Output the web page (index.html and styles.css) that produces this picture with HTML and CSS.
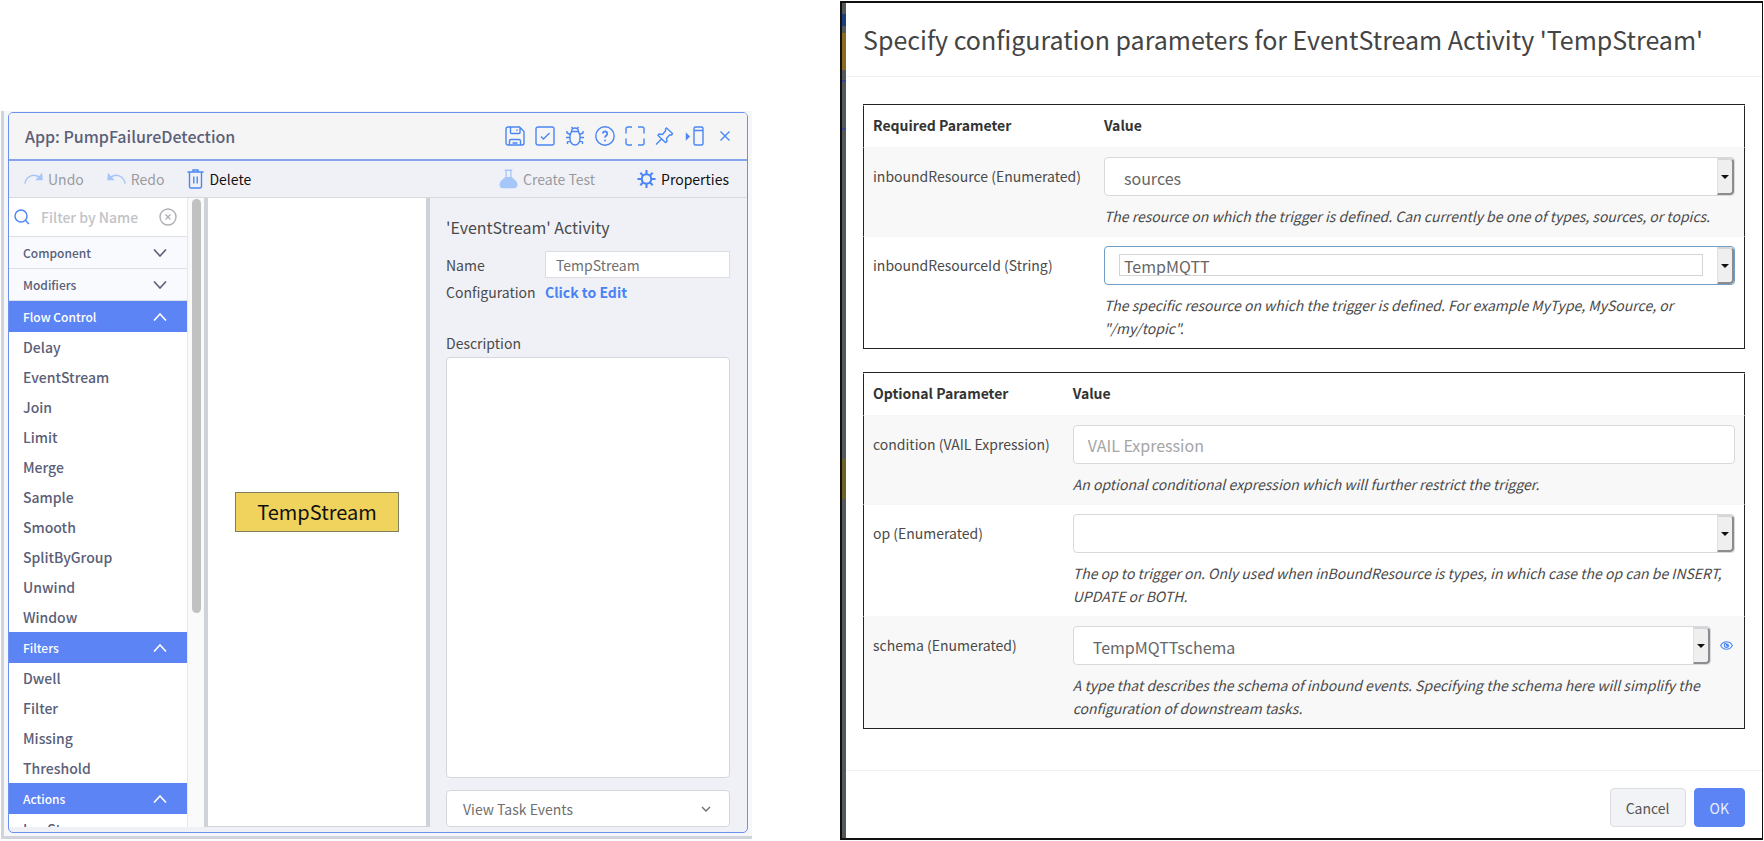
FILE: index.html
```html
<!DOCTYPE html>
<html lang="en">
<head>
<meta charset="utf-8">
<title>App: PumpFailureDetection</title>
<link rel="stylesheet" href="styles.css">
</head>
<body>
<main class="page">
  <section class="frame">
    <div class="app">
      <header class="app-header">
        <h1 class="app-title">App: PumpFailureDetection</h1>
        <div class="app-actions">
          <button class="icon-btn" aria-label="Save"><svg viewBox="0 0 20 20"><path d="M3 1h11.5L19 5.500V17a2 2 0 0 1-2 2H3a2 2 0 0 1-2-2V3a2 2 0 0 1 2-2zM5.500 1v5.500a1 1 0 0 0 1 1h7.500a1 1 0 0 0 1-1V1.500M12 3.500v1.500M4.500 19v-4a1.500 1.500 0 0 1 1.500-1.500h8a1.500 1.500 0 0 1 1.500 1.500v4M7.500 17h5"/></svg></button>
          <button class="icon-btn" aria-label="Validate"><svg viewBox="0 0 20 20"><rect x="1" y="1" width="18" height="18" rx="2"/><path d="M6 10.500l2.500 2.500L14.500 7"/></svg></button>
          <button class="icon-btn" aria-label="Debug"><svg viewBox="0 0 20 20"><path d="M6.500 5.500a3.500 3.500 0 0 1 7 0M6.500 5.500h7l1.500 4v3.500a5 6 0 0 1-10 0V9.500zM5.500 8.500L2 7V5M5 11.500H1M5.500 14.500L2.500 16v2M14.500 8.500L18 7V5M15 11.500H19M14.500 14.500l3 1.500v2M7.500 2.500L6.500 1M12.500 2.500l1-1.500"/></svg></button>
          <button class="icon-btn" aria-label="Help"><svg viewBox="0 0 20 20"><circle cx="10" cy="10" r="9.200"/><path stroke-width="1.800" d="M7.800 7.600a2.200 2.200 0 1 1 3.500 1.800c-.9.600-1.300 1-1.300 2.100M10 13.800v1.400"/></svg></button>
          <button class="icon-btn" aria-label="Full screen"><svg viewBox="0 0 20 20"><path d="M7 1H3a2 2 0 0 0-2 2v4.500M13 1h4a2 2 0 0 1 2 2v4.500M7 19H3a2 2 0 0 1-2-2v-4.500M13 19h4a2 2 0 0 0 2-2v-4.500"/></svg></button>
          <button class="icon-btn" aria-label="Pin"><svg viewBox="0 0 20 20"><path d="M11.500 2l6 5.500-1 1.500h-2l-3 3.500.5 3-1.500 1L3 9.500l1-1.500 3.500.5L10.500 5V3zM6.500 13L1 18.500"/></svg></button>
          <button class="icon-btn" aria-label="Dock"><svg viewBox="0 0 20 20"><path d="M10.500 1h6a1.500 1.500 0 0 1 1.500 1.500v15a1.500 1.500 0 0 1-1.500 1.500h-6A1.500 1.500 0 0 1 9 17.500v-15A1.500 1.500 0 0 1 10.500 1zM9 4.500h9"/><path class="solid" d="M1.500 8L4 10.500l-2.500 2.500z"/></svg></button>
          <button class="icon-btn" aria-label="Close"><svg viewBox="0 0 20 20"><path d="M5.500 5.500l9 9M14.500 5.500l-9 9"/></svg></button>
        </div>
      </header>
      <div class="toolbar">
        <div class="tools">
          <button class="tool" disabled><svg class="tool-icon" viewBox="0 0 20 20"><path d="M1 15C2 7 11 3 17 9"/><path class="solid" d="M13.500 10.500L19 10.500 18.500 5z"/></svg>Undo</button>
          <button class="tool" disabled><svg class="tool-icon" viewBox="0 0 20 20"><path d="M19 15C18 7 9 3 3 9"/><path class="solid" d="M6.500 10.500L1 10.500 1.500 5z"/></svg>Redo</button>
          <button class="tool"><svg class="tool-icon trash" viewBox="0 0 16 20"><path d="M0 3h16M2 3.500v14A1.500 1.500 0 0 0 3.500 19h9a1.500 1.500 0 0 0 1.500-1.500v-14M5.500 3V1h5v2M6.300 7.500v7M9.700 7.500v7"/></svg>Delete</button>
        </div>
        <div class="tools tools-end">
          <button class="tool" disabled><svg class="tool-icon" viewBox="0 0 20 20"><path d="M6 .800h8M7.500 1v7M12.500 1v7"/><path class="solid" d="M7 8.500L2.500 12.500C.500 15 1 19 4 19h12c3 0 3.500-4 1.500-6.500L13 8.500z"/></svg>Create Test</button>
          <button class="tool"><svg class="tool-icon gear" viewBox="0 0 20 20"><circle cx="10" cy="10" r="5"/><path d="M10 5V.500M10 19.500V15M5 10H.500M19.500 10H15M6.500 6.500L3.500 3.500M16.500 16.500l-3-3M6.500 13.500l-3 3M16.500 3.500l-3 3"/></svg>Properties</button>
        </div>
      </div>
      <div class="workspace">
        <aside class="sidebar">
          <div class="palette">
            <div class="filter">
              <svg class="search-icon" viewBox="0 0 16 16"><circle cx="7" cy="7" r="6"/><path d="M11.300 11.300L15 15"/></svg>
              <input class="filter-input" type="text" aria-label="Filter by Name" placeholder="Filter by Name">
              <button class="clear" aria-label="Clear filter"><svg viewBox="0 0 18 18"><circle cx="9" cy="9" r="8"/><path d="M6.500 6.500l5 5M11.500 6.500l-5 5"/></svg></button>
            </div>
            <button class="group">Component<svg class="chevron" viewBox="0 0 14 8"><path d="M1 .500l6 6.500 6-6.500"/></svg></button>
            <button class="group">Modifiers<svg class="chevron" viewBox="0 0 14 8"><path d="M1 .500l6 6.500 6-6.500"/></svg></button>
            <button class="group open">Flow Control<svg class="chevron" viewBox="0 0 14 8"><path d="M1 7.500L7 1l6 6.500"/></svg></button>
            <ul class="items">
              <li>Delay</li><li>EventStream</li><li>Join</li><li>Limit</li><li>Merge</li><li>Sample</li><li>Smooth</li><li>SplitByGroup</li><li>Unwind</li><li>Window</li>
            </ul>
            <button class="group open">Filters<svg class="chevron" viewBox="0 0 14 8"><path d="M1 7.500L7 1l6 6.500"/></svg></button>
            <ul class="items">
              <li>Dwell</li><li>Filter</li><li>Missing</li><li>Threshold</li>
            </ul>
            <button class="group open">Actions<svg class="chevron" viewBox="0 0 14 8"><path d="M1 7.500L7 1l6 6.500"/></svg></button>
            <ul class="items">
              <li>LogStream</li>
            </ul>
          </div>
          <div class="scroll-track"><div class="scroll-thumb"></div></div>
        </aside>
        <div class="canvas">
          <div class="node">TempStream</div>
        </div>
        <form class="properties">
          <h2 class="prop-title">'EventStream' Activity</h2>
          <div class="prop-grid">
            <label for="task-name">Name</label>
            <input id="task-name" class="prop-input" type="text" value="TempStream">
            <span>Configuration</span>
            <a class="edit-link" href="#config">Click to Edit</a>
          </div>
          <label class="desc-label" for="task-desc">Description</label>
          <textarea id="task-desc" class="desc"></textarea>
          <button class="events" type="button">View Task Events<svg class="small-chevron" viewBox="0 0 10 6"><path d="M1 1l4 4 4-4"/></svg></button>
        </form>
      </div>
    </div>
  </section>

  <section class="dialog" id="config" role="dialog" aria-labelledby="dialog-title">
    <div class="dialog-body">
      <header class="dialog-header"><h2 class="dialog-title" id="dialog-title">Specify configuration parameters for EventStream Activity 'TempStream'</h2></header>
      <div class="dialog-content">
        <table class="params">
          <thead><tr><th>Required Parameter</th><th>Value</th></tr></thead>
          <tbody>
            <tr>
              <td><label for="p-resource">inboundResource (Enumerated)</label></td>
              <td>
                <div class="picker"><select id="p-resource"><option>sources</option></select><span class="drop"></span></div>
                <p class="hint">The resource on which the trigger is defined. Can currently be one of types, sources, or topics.</p>
              </td>
            </tr>
            <tr>
              <td><label for="p-id">inboundResourceId (String)</label></td>
              <td>
                <div class="picker combo"><input id="p-id" type="text" value="TempMQTT"><button class="drop" aria-label="Show choices"></button></div>
                <p class="hint">The specific resource on which the trigger is defined. For example MyType, MySource, or "/my/topic".</p>
              </td>
            </tr>
          </tbody>
        </table>
        <table class="params">
          <thead><tr><th>Optional Parameter</th><th>Value</th></tr></thead>
          <tbody>
            <tr>
              <td><label for="p-cond">condition (VAIL Expression)</label></td>
              <td>
                <input id="p-cond" class="text-field" type="text" placeholder="VAIL Expression">
                <p class="hint">An optional conditional expression which will further restrict the trigger.</p>
              </td>
            </tr>
            <tr>
              <td><label for="p-op">op (Enumerated)</label></td>
              <td>
                <div class="picker"><select id="p-op"><option></option></select><span class="drop"></span></div>
                <p class="hint">The op to trigger on. Only used when inBoundResource is types, in which case the op can be INSERT, UPDATE or BOTH.</p>
              </td>
            </tr>
            <tr>
              <td><label for="p-schema">schema (Enumerated)</label></td>
              <td>
                <div class="with-action">
                  <div class="picker"><select id="p-schema"><option>TempMQTTschema</option></select><span class="drop"></span></div>
                  <button class="view" aria-label="View schema"><svg viewBox="0 0 12 10"><path d="M.600 5C3 .300 9 .300 11.400 5 9 9.700 3 9.700 .600 5z"/><path d="M6 2.800a2 2 0 1 0 2 2"/><circle class="solid" cx="6.700" cy="4.600" r=".9"/></svg></button>
                </div>
                <p class="hint">A type that describes the schema of inbound events. Specifying the schema here will simplify the configuration of downstream tasks.</p>
              </td>
            </tr>
          </tbody>
        </table>
      </div>
      <footer class="dialog-footer">
        <button class="btn">Cancel</button>
        <button class="btn primary">OK</button>
      </footer>
    </div>
  </section>
</main>
</body>
</html>
```

FILE: styles.css
```css
* { box-sizing: border-box; }

body {
  margin: 0;
  background: #fff;
  color: #4a4a4a;
  font-family: "Noto Sans CJK SC", "Open Sans", sans-serif;
  font-size: 14px;
  line-height: 24px;
}

button, input, select, textarea { font: inherit; color: inherit; margin: 0; }
button { background: none; border: 0; padding: 0; text-align: left; }
h1, h2, p, ul { margin: 0; padding: 0; font-weight: 400; }
svg { display: block; fill: none; stroke: currentColor; stroke-width: 1.4; }
.solid { fill: currentColor; }

.page {
  display: grid;
  grid-template-columns: 752fr 924fr;
  grid-template-rows: minmax(0, 1fr);
  gap: 88px;
  height: 100vh;
  min-height: 841px;
}

/* App window */
.frame {
  display: flex;
  min-height: 0;
  margin: 111px 0 2px 1px;
  padding: 1px 4px 3px;
  border-left: 3px solid #d0d2dc;
  border-bottom: 3px solid #d0d2dc;
  background: #f6f7fa;
}

.app {
  flex: 1;
  min-width: 0;
  display: flex;
  flex-direction: column;
  padding-bottom: 5px;
  border: 1px solid #6b90ee;
  border-radius: 5px;
  background: #f0f1f6;
  overflow: hidden;
}

.app-header {
  display: flex;
  align-items: center;
  justify-content: space-between;
  height: 48px;
  padding: 0 12px 0 16px;
  border-bottom: 2px solid #86a3ee;
  background: #f5f5f5;
}

.app-title { color: #5a6078; font-size: 16px; font-weight: 500; }
.app-actions { display: flex; gap: 10px; color: #4a86f5; }
.icon-btn svg { width: 20px; height: 20px; }

.toolbar {
  display: flex;
  justify-content: space-between;
  height: 37px;
  padding: 0 18px 0 15px;
  border-bottom: 1px solid #d9dade;
}

.tools { display: flex; gap: 23px; }
.tools-end { gap: 42px; }
.tool { display: flex; align-items: center; gap: 5px; color: #111; font-size: 14px; }
.tool:disabled { color: #9a9b9f; }
.tool-icon { width: 19px; height: 20px; color: #4a86f5; }
.tool:disabled .tool-icon { color: #a5c6f9; }
.tool .trash { width: 17px; }
.gear { stroke-width: 2.2; }

.workspace { flex: 1; min-height: 0; display: flex; }

.sidebar { display: flex; width: 195px; overflow: hidden; }
.palette { flex: 1; overflow: hidden; background: #fff; color: #5a6078; font-weight: 500; }
.filter { display: flex; align-items: center; height: 39px; padding: 0 10px 0 5px; border-bottom: 1px solid #dddfe5; }
.search-icon { width: 16px; height: 16px; color: #4a86f5; }
.filter-input { flex: 1; min-width: 0; height: 30px; padding: 0 0 0 11px; border: 0; background: none; outline: 0; }
.filter-input::placeholder { color: #c2c3c8; opacity: 1; }
.clear svg { width: 18px; height: 18px; color: #aeb0b5; }

.group {
  display: flex;
  align-items: center;
  justify-content: space-between;
  width: 100%;
  height: 32px;
  padding: 0 20px 0 14px;
  border-bottom: 1px solid #dddfe5;
  background: #f9fafe;
  font-size: 12px;
  font-weight: 500;
}
.group.open { height: 31px; border-bottom: 0; background: #5c84f4; color: #fff; }
.chevron { width: 14px; height: 8px; stroke-width: 1.6; }

.items { list-style: none; padding-left: 14px; line-height: 30px; font-weight: 500; }

.scroll-track { width: 17px; padding: 1px 4px; border-left: 1px solid #e6e7ea; background: #fafafa; }
.scroll-thumb { width: 9px; height: 66%; border-radius: 5px; background: #c1c1c1; }

.canvas {
  flex: 1;
  display: grid;
  place-items: center;
  border: solid #d0d2d9;
  border-width: 0 4px 1px;
  background: #fff;
}
.node {
  padding: 5px 21px;
  border: 1px solid #80805f;
  background: #efd35d;
  color: #111;
  font-size: 20px;
  line-height: 28px;
}

.properties { width: 317px; display: flex; flex-direction: column; padding: 17px 17px 0 16px; }
.prop-title { font-size: 16px; }
.prop-grid { display: grid; grid-template-columns: 99px 1fr; align-items: center; row-gap: 2px; margin-top: 12px; }
.prop-input { width: 100%; height: 27px; padding: 0 10px; border: 1px solid #dcdde2; background: #fff; color: #707070; }
.edit-link { color: #4a82f5; font-weight: 700; text-decoration: none; }
.desc-label { margin-top: 27px; }
.desc { flex: 1; width: 100%; margin: 2px 0 12px; border: 1px solid #d5d7dc; border-radius: 4px; background: #fff; resize: none; }
.events {
  display: flex;
  align-items: center;
  justify-content: space-between;
  height: 37px;
  padding: 0 18px 0 16px;
  border: 1px solid #d5d7dc;
  border-radius: 4px;
  background: #fff;
  color: #707070;
}
.small-chevron { width: 10px; height: 6px; }

/* Dialog */
.dialog {
  display: flex;
  margin: 1px 1px 1px 0;
  padding-left: 4px;
  border: 2px solid #111;
  border-right-width: 1px;
  background: linear-gradient(#55585b 11px, #1d3c7c 11px 23px, #55585b 23px 30px, #8a6a22 30px 67px, #55585b 67px 77px, #3b4690 77px 79px, #55585b 79px 125px, #3b4690 125px 127px, #55585b 127px 456px, #6d6128 456px 496px, #55585b 496px);
}
.dialog-body { flex: 1; display: flex; flex-direction: column; background: #fff; }
.dialog-header { display: flex; align-items: center; height: 74px; padding: 0 17px 2px; border-bottom: 1px solid #f0f0f1; }
.dialog-title { font-size: 25px; line-height: 32px; color: #444; }
.dialog-content { flex: 1; display: flex; flex-direction: column; gap: 23px; padding: 27px 17px 0; }

.params { width: 100%; border-spacing: 0; border: solid #222; border-width: 1px 0; }
.params th, .params td { padding: 9px 9px 8px; border-top: 1px solid #f6f6f6; text-align: left; vertical-align: top; }
.params th { border-top-color: #fff; padding: 7px 9px 10px; color: #333; font-weight: 700; }
.params th:first-child, .params td:first-child { padding-right: 14px; border-left: 1px solid #222; white-space: nowrap; }
.params th:last-child, .params td:last-child { border-right: 1px solid #222; width: 100%; }
.params tbody tr:nth-child(odd) { background: #f8f8f8; }
.params td label { display: block; padding-top: 7px; }

.picker { position: relative; flex: 1; display: flex; }
.picker select, .text-field {
  appearance: none;
  width: 100%;
  height: 39px;
  padding: 2px 19px 0;
  border: 1px solid #d8d9dd;
  border-radius: 4px;
  background: #fff;
  color: #666;
  font-size: 16px;
}
.text-field { padding: 0 14px; }
.text-field::placeholder { color: #a5a5a5; opacity: 1; }
.drop {
  position: absolute;
  top: 1px;
  right: 1px;
  bottom: 1px;
  width: 17px;
  display: grid;
  place-items: center;
  border: 2px solid #8c8c8e;
  border-top-color: #d6d6d8;
  border-left: 1px solid #e0e0e2;
  border-radius: 0 4px 4px 0;
  background: #efefef;
  pointer-events: none;
}
.drop::after { content: ""; border: 4px solid transparent; border-top-color: #111; border-bottom: 0; }
.combo { height: 39px; padding: 7px 31px 8px 14px; border: 1px solid #6f9fc6; border-radius: 4px; background: #fff; }
.combo input { width: 100%; padding: 2px 4px 0; border: 1px solid #d4d4d4; background: #fff; color: #666; font-size: 16px; outline: 0; }
.combo .drop { top: 0; right: 0; bottom: 0; }
.with-action { display: flex; align-items: center; gap: 9px; }
.view { color: #4a86f5; padding-right: 2px; }
.view svg { width: 13px; height: 11px; stroke-width: 1; }

.hint { margin-top: 9px; font-size: 14px; line-height: 23px; font-style: italic; }

.dialog-footer { display: flex; justify-content: flex-end; gap: 8px; padding: 17px 17px 11px; border-top: 1px solid #f0f0f1; }
.btn { height: 39px; padding: 0 15px; border: 1px solid #dddee2; border-radius: 4px; background: #f2f3f6; color: #555; }
.btn.primary { border-color: #5c84f4; background: #5c84f4; color: #e8eeff; }
```
